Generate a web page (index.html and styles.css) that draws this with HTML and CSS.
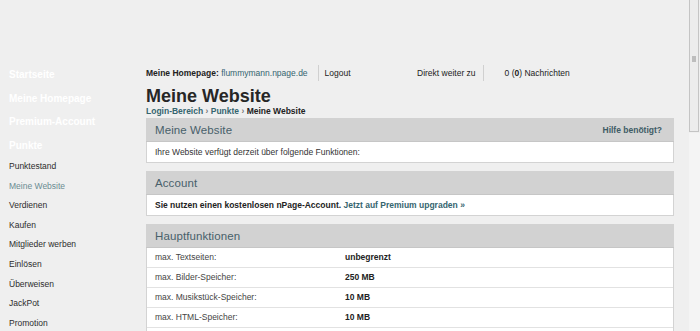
FILE: index.html
```html
<!DOCTYPE html>
<html lang="de">
<head>
<meta charset="utf-8">
<title>Meine Website</title>
<link rel="stylesheet" href="styles.css">
</head>
<body>
<div class="page">
  <nav class="sidebar">
    <a class="nav-head">Startseite</a>
    <a class="nav-head">Meine Homepage</a>
    <a class="nav-head">Premium-Account</a>
    <a class="nav-head">Punkte</a>
    <ul class="subnav">
      <li>Punktestand</li>
      <li class="active">Meine Website</li>
      <li>Verdienen</li>
      <li>Kaufen</li>
      <li>Mitglieder werben</li>
      <li>Einlösen</li>
      <li>Überweisen</li>
      <li>JackPot</li>
      <li>Promotion</li>
    </ul>
  </nav>
  <main class="main">
    <div class="topbar">
      <div class="top-left">
        <span class="hp"><b>Meine Homepage:</b> <a class="link">flummymann.npage.de</a></span>
        <span class="sep"></span>
        <span>Logout</span>
      </div>
      <div class="top-right">
        <span>Direkt weiter zu</span>
        <span class="sep sep2"></span>
        <span>0 (<b>0</b>) Nachrichten</span>
      </div>
    </div>
    <h1 class="title">Meine Website</h1>
    <div class="crumbs"><span class="link">Login-Bereich</span> › <span class="link">Punkte</span> › <span class="current">Meine Website</span></div>

    <section class="panel">
      <div class="panel-head"><h2>Meine Website</h2><a class="help">Hilfe benötigt?</a></div>
      <div class="panel-body">Ihre Website verfügt derzeit über folgende Funktionen:</div>
    </section>

    <section class="panel">
      <div class="panel-head"><h2>Account</h2></div>
      <div class="panel-body"><b>Sie nutzen einen kostenlosen nPage-Account.</b>&nbsp;<a class="link strong">Jetzt auf Premium upgraden »</a></div>
    </section>

    <section class="panel">
      <div class="panel-head"><h2>Hauptfunktionen</h2></div>
      <div class="rows">
        <div class="row"><span class="lbl">max. Textseiten:</span><span class="val">unbegrenzt</span></div>
        <div class="row"><span class="lbl">max. Bilder-Speicher:</span><span class="val">250 MB</span></div>
        <div class="row"><span class="lbl">max. Musikstück-Speicher:</span><span class="val">10 MB</span></div>
        <div class="row"><span class="lbl">max. HTML-Speicher:</span><span class="val">10 MB</span></div>
      </div>
    </section>
  </main>
  <div class="side-strip"></div>
  <div class="mini-scroll"><span class="grip"></span></div>
</div>
</body>
</html>
```

FILE: styles.css
```css
html, body {
  margin: 0;
  padding: 0;
  background: #efefef;
  height: 100%;
  overflow: hidden;
}
body {
  font-family: "Liberation Sans", Arial, sans-serif;
  font-size: 8.5px;
  color: #333;
}
.page {
  display: flex;
  position: relative;
  height: 331px;
  overflow: hidden;
}
.sidebar {
  width: 137px;
  padding: 63px 0 0 9px;
  flex: none;
}
.nav-head {
  display: block;
  font-size: 10px;
  font-weight: bold;
  color: #ffffff;
  line-height: 23.5px;
}
.subnav {
  list-style: none;
  margin: 0;
  padding: 0;
}
.subnav li {
  line-height: 19.6px;
  color: #2c2c2c;
}
.subnav li.active {
  color: #6b8c92;
}
.main {
  width: 528px;
  flex: none;
  padding-top: 65px;
}
.topbar {
  display: flex;
  height: 16px;
  align-items: center;
  color: #222;
}
.top-left {
  display: flex;
  align-items: center;
  width: 271px;
}
.top-right {
  display: flex;
  align-items: center;
}
.sep {
  width: 1px;
  height: 16px;
  background: #d0d0d0;
  margin: 0 6px 0 10px;
}
.sep2 {
  margin: 0 21px 0 7px;
}
.link {
  color: #35656f;
}
.title {
  margin: 5px 0 0;
  font-size: 18px;
  line-height: 20px;
  font-weight: bold;
  color: #262626;
}
.crumbs {
  font-weight: bold;
  line-height: 11px;
  color: #777;
  margin-bottom: 1px;
}
.crumbs .current {
  color: #222;
}
.panel {
  margin-bottom: 8px;
}
.panel-head {
  display: flex;
  align-items: center;
  justify-content: space-between;
  height: 23px;
  background: #d2d2d2;
  border-bottom: 1px solid #c6c6c6;
  padding: 0 12px 0 9px;
}
.panel-head h2 {
  margin: 0;
  font-size: 11.5px;
  font-weight: normal;
  color: #48606a;
  letter-spacing: 0.1px;
}
.help {
  font-weight: bold;
  color: #3f5c66;
}
.panel-body {
  height: 20px;
  line-height: 20px;
  background: #fff;
  border: 1px solid #d3d3d3;
  border-top: 0;
  padding-left: 8px;
  color: #333;
}
.panel-body b {
  color: #222;
}
.strong {
  font-weight: bold;
}
.rows {
  background: #fff;
  border: 1px solid #d3d3d3;
  border-top: 0;
  border-bottom: 0;
  padding-bottom: 12px;
}
.row {
  display: flex;
  height: 19px;
  line-height: 19px;
  border-bottom: 1px solid #e2e2e2;
  padding-left: 8px;
}
.lbl {
  width: 190px;
  color: #444;
}
.val {
  font-weight: bold;
  color: #222;
}
.side-strip {
  position: absolute;
  left: 689px;
  top: 133px;
  width: 11px;
  bottom: 0;
  background: #f4f4f4;
}
.mini-scroll {
  position: absolute;
  left: 689px;
  top: 0;
  width: 8px;
  height: 131px;
  border: 1px solid #c4c4c4;
  border-top: 0;
  background: #ececec;
}
.grip {
  position: absolute;
  left: 2px;
  top: 56px;
  width: 4px;
  height: 6px;
  background: #bdbdbd;
}
```
